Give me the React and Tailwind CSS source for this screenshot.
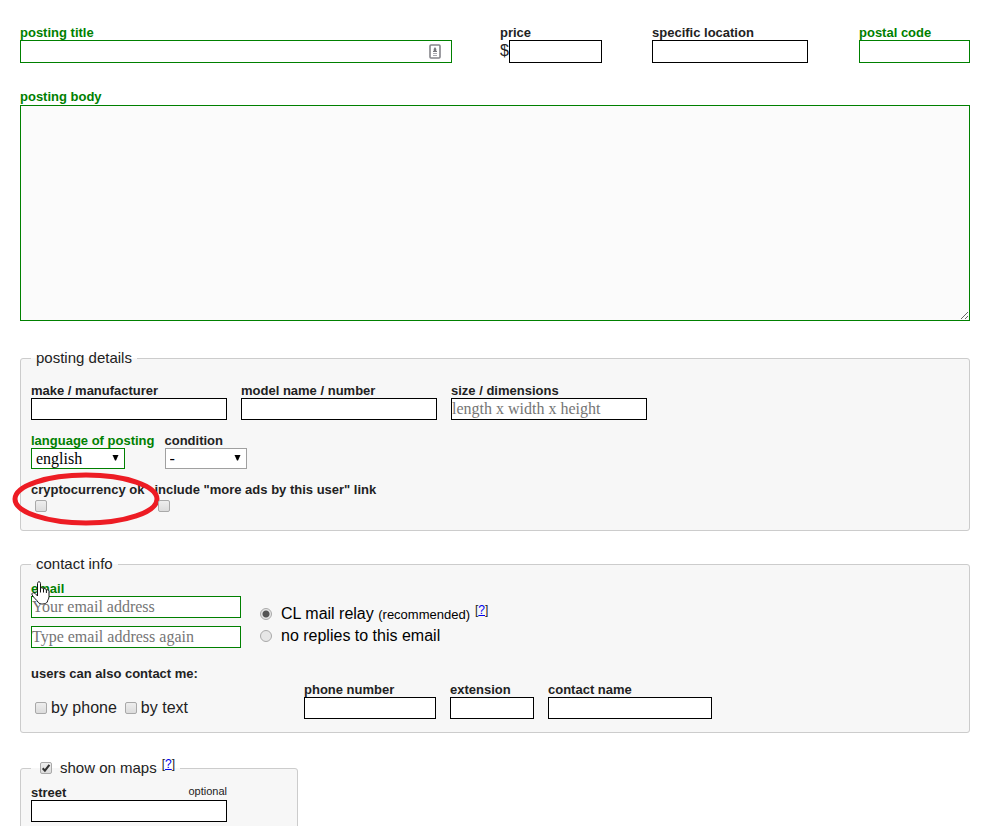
import React, { useState } from 'react';

const boxStyle = 'bg-white border font-["Liberation_Serif",serif] text-base leading-5 text-black outline-none placeholder:text-[#757575] placeholder:opacity-100';

function Field({ id, label, note, required, tall, className, placeholder, type = 'text' }) {
  return (
    <div className={className}>
      <div className="flex justify-between">
        <label htmlFor={id} className={required ? 'font-bold text-[#008000]' : 'font-bold'}>{label}</label>
        {note && <span className="text-[11px] leading-3">{note}</span>}
      </div>
      <input
        id={id}
        type={type}
        placeholder={placeholder}
        className={`${boxStyle} block w-full ${tall ? 'h-[23px]' : 'h-[22px]'} ${required ? 'border-[#008000]' : 'border-black'}`}
      />
    </div>
  );
}

function Dropdown({ id, label, required, options, className }) {
  return (
    <div>
      <label htmlFor={id} className={required ? 'block font-bold text-[#008000]' : 'block font-bold'}>{label}</label>
      <div className={`relative ${className}`}>
        <select
          id={id}
          className={`${boxStyle} block appearance-none w-full h-[21px] pl-1 ${required ? 'border-[#008000]' : 'border-[#a0a0a0]'}`}
        >
          {options.map(option => <option key={option}>{option}</option>)}
        </select>
        <svg viewBox="0 0 7 6" className="absolute right-[6px] top-[7px] w-[7px] h-[6px] pointer-events-none">
          <path d="M.5 0H6.5L4 5.5H3Z" fill="#000" />
        </svg>
      </div>
    </div>
  );
}

function Checkbox({ id, checked = false }) {
  const [on, setOn] = useState(checked);

  return (
    <span className="relative block size-3 shrink-0">
      <input
        id={id}
        type="checkbox"
        checked={on}
        onChange={e => setOn(e.target.checked)}
        className="block appearance-none size-3 rounded-[2px] border border-[#a9a9a9] bg-linear-to-b from-[#eeeeee] to-[#dcdcdc]"
      />
      {on && (
        <svg viewBox="0 0 12 12" className="absolute inset-0 size-3 pointer-events-none">
          <path d="M2.7 6.2L4.9 8.6L9.4 2.8" fill="none" stroke="#333" strokeWidth="2.1" />
        </svg>
      )}
    </span>
  );
}

function Radio({ id, value, selected, onSelect }) {
  return (
    <input
      id={id}
      type="radio"
      name="privacy"
      checked={selected === value}
      onChange={() => onSelect(value)}
      className="appearance-none size-3 shrink-0 rounded-full border border-[#a9a9a9] bg-[#e6e6e6] checked:bg-[radial-gradient(circle,#555_0_3px,#e6e6e6_4px)]"
    />
  );
}

function HelpLink() {
  return (
    <a href="#help" className="relative -top-1 ml-[5px] text-xs leading-3 text-[#222]">
      [<span className="text-[#0000ee] underline">?</span>]
    </a>
  );
}

function App() {
  const [privacy, setPrivacy] = useState('relay');

  return (
    <form className="h-screen overflow-hidden bg-white pl-5 pr-[19px] pt-[25px] font-['Liberation_Sans',Arial,sans-serif] text-[13px] leading-[15px] text-[#222]">
      <div className="flex justify-between">
        <div className="flex gap-12">
          <div className="relative w-[432px]">
            <Field id="title" label="posting title" required tall />
            <svg viewBox="0 0 12 15" className="absolute right-[11px] bottom-1 w-3 h-[15px]">
              <rect x="1" y="1" width="10" height="13" rx="1" fill="#fff" stroke="#85858b" strokeWidth="1.6" />
              <path d="M6 3L7.3 5V7H8V8H4V7H4.7V5Z" fill="#77777d" />
              <path d="M4 9.5H8M4 11.5H8" stroke="#aaaab0" />
            </svg>
          </div>
          <div>
            <label htmlFor="price" className="block font-bold">price</label>
            <div className="flex">
              <span className="text-base leading-[22px]">$</span>
              <input id="price" type="text" className={`${boxStyle} w-[93px] h-[23px] border-black`} />
            </div>
          </div>
        </div>
        <div className="flex gap-[51px]">
          <Field id="location" label="specific location" tall className="w-[156px]" />
          <Field id="postal" label="postal code" required tall className="w-[111px]" />
        </div>
      </div>

      <div className="mt-[26px]">
        <label htmlFor="body" className="block font-bold leading-4 text-[#008000]">posting body</label>
        <textarea id="body" className="block w-full h-[216px] resize-y border border-[#008000] bg-[#fbfbfb] p-px font-['Liberation_Serif',serif] text-base outline-none" />
      </div>

      <fieldset className="mt-7 rounded-[3px] border border-[#ccc] bg-[#f7f7f7] px-[10px] pt-4 pb-[18px]">
        <legend className="px-[5px] text-[15px] leading-[18px]">posting details</legend>
        <div className="flex gap-[14px]">
          <Field id="make" label="make / manufacturer" className="w-[196px]" />
          <Field id="model" label="model name / number" className="w-[196px]" />
          <Field id="size" label="size / dimensions" placeholder="length x width x height" className="w-[196px]" />
        </div>
        <div className="mt-[13px] flex gap-[10px]">
          <Dropdown id="language" label="language of posting" required options={['english', 'español', 'français']} className="w-[94px]" />
          <Dropdown id="condition" label="condition" options={['-', 'new', 'like new', 'good', 'fair']} className="w-[82px]" />
        </div>
        <div className="mt-[13px] flex gap-[10px]">
          <div className="relative">
            <label htmlFor="crypto" className="block font-bold">cryptocurrency ok</label>
            <div className="mt-[3px] ml-1"><Checkbox id="crypto" /></div>
            <svg viewBox="0 0 148 54" className="absolute -left-[19px] -top-[10px] w-[148px] h-[54px] max-w-none pointer-events-none">
              <ellipse cx="74" cy="27" rx="71" ry="24" fill="none" stroke="#ed1c24" strokeWidth="5" />
            </svg>
          </div>
          <div>
            <label htmlFor="more-ads" className="block font-bold">include "more ads by this user" link</label>
            <div className="mt-[3px] ml-1"><Checkbox id="more-ads" /></div>
          </div>
        </div>
      </fieldset>

      <fieldset className="mt-6 rounded-[3px] border border-[#ccc] bg-[#f7f7f7] px-[10px] pt-2 pb-[13px]">
        <legend className="px-[5px] text-[15px] leading-[18px]">contact info</legend>
        <div className="flex gap-[19px]">
          <div className="relative w-[210px]">
            <Field id="email" type="email" label="email" required placeholder="Your email address" />
            <input
              type="email"
              aria-label="confirm email"
              placeholder="Type email address again"
              className={`${boxStyle} mt-2 block w-full h-[22px] border-[#008000]`}
            />
            <svg viewBox="0 0 19 24" className="absolute left-0 top-0 w-[19px] h-6 pointer-events-none">
              <path
                d="M6.5 15V2.5C6.5 .2 9.5 .2 9.5 2.5V7.5C10 6.3 12.3 6.6 12.5 8C13.3 7.2 15.2 7.6 15.4 9C16.4 8.4 18 9 18 10.5V15.5C18 18 16.5 19 16.3 21C14.5 23.6 9 23.6 7.3 21.5C6 19 2.5 16.7 1 13.8C.5 12 2.6 11 4 12.3Z"
                fill="#fff"
                stroke="#111"
              />
              <path d="M9.5 7V11.5M12.5 8V11.5M15.4 9V12" stroke="#111" />
            </svg>
          </div>
          <div className="pt-[22px] text-base leading-[22px] text-black">
            <div className="flex items-center">
              <Radio id="relay" value="relay" selected={privacy} onSelect={setPrivacy} />
              <label htmlFor="relay" className="ml-[9px]">CL mail relay <span className="text-[13px] leading-4">(recommended)</span></label>
              <HelpLink />
            </div>
            <div className="flex items-center">
              <Radio id="no-replies" value="none" selected={privacy} onSelect={setPrivacy} />
              <label htmlFor="no-replies" className="ml-[9px]">no replies to this email</label>
            </div>
          </div>
        </div>
        <div className="mt-[18px] flex">
          <div className="w-[273px]">
            <div className="font-bold">users can also contact me:</div>
            <div className="mt-[17px] flex gap-2 pl-1 text-base leading-5">
              <div className="flex items-center gap-1">
                <Checkbox id="by-phone" />
                <label htmlFor="by-phone">by phone</label>
              </div>
              <div className="flex items-center gap-1">
                <Checkbox id="by-text" />
                <label htmlFor="by-text">by text</label>
              </div>
            </div>
          </div>
          <div className="flex gap-[14px] pt-4">
            <Field id="phone" type="tel" label="phone number" className="w-[132px]" />
            <Field id="extension" label="extension" className="w-[84px]" />
            <Field id="contact-name" label="contact name" className="w-[164px]" />
          </div>
        </div>
      </fieldset>

      <fieldset className="mt-[26px] w-[278px] rounded-[3px] border border-[#ccc] bg-[#f7f7f7] px-[10px] pt-2 pb-6">
        <legend className="px-[5px] text-[15px] leading-[18px]">
          <div className="flex items-center pl-1">
            <Checkbox id="maps" checked />
            <label htmlFor="maps" className="ml-2">show on maps</label>
            <HelpLink />
          </div>
        </legend>
        <Field id="street" label="street" note="optional" className="w-[196px]" />
      </fieldset>
    </form>
  );
}

export default App;
